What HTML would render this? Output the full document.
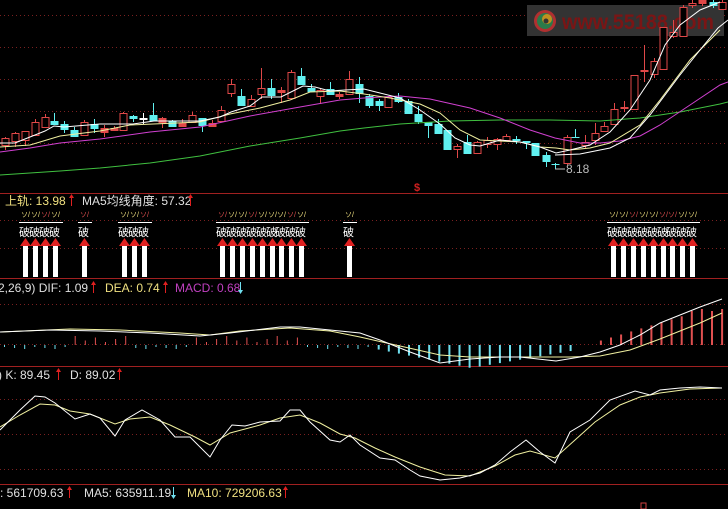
<!DOCTYPE html>
<html><head><meta charset="utf-8"><style>
html,body{margin:0;padding:0;background:#000;width:728px;height:509px;overflow:hidden}
svg{display:block}
text{font-family:"Liberation Sans","Noto Sans CJK SC",sans-serif;font-size:12px}
</style></head><body>
<svg id="s" width="728" height="509" xmlns="http://www.w3.org/2000/svg">
<g stroke="#7a2020" stroke-dasharray="1,3" stroke-width="1">
<line x1="0" y1="15.5" x2="728" y2="15.5"/><line x1="0" y1="47.5" x2="728" y2="47.5"/><line x1="0" y1="79.5" x2="728" y2="79.5"/><line x1="0" y1="111.5" x2="728" y2="111.5"/><line x1="0" y1="143.5" x2="728" y2="143.5"/>
<line x1="0" y1="220.5" x2="728" y2="220.5"/><line x1="0" y1="248.5" x2="728" y2="248.5"/>
<line x1="0" y1="304.5" x2="728" y2="304.5"/><line x1="0" y1="344.5" x2="728" y2="344.5"/>
<line x1="0" y1="399.5" x2="728" y2="399.5"/><line x1="0" y1="434.5" x2="728" y2="434.5"/><line x1="0" y1="469.5" x2="728" y2="469.5"/>
</g>
<g stroke="#a02020" stroke-width="1">
<line x1="0" y1="193.5" x2="728" y2="193.5"/><line x1="0" y1="278.5" x2="728" y2="278.5"/><line x1="0" y1="366.5" x2="728" y2="366.5"/><line x1="0" y1="484.5" x2="728" y2="484.5"/>
</g>
<rect x="527" y="5" width="197" height="31" fill="#333"/>
<circle cx="545" cy="21" r="11" fill="#b03030"/><circle cx="545" cy="21" r="8" fill="#2a7a4a"/><circle cx="547" cy="19" r="5" fill="#c09020"/><circle cx="546" cy="21" r="2.5" fill="#333"/>
<text x="562" y="29" fill="#7a1515" textLength="152" lengthAdjust="spacingAndGlyphs" style="font-size:21px;font-weight:bold">www.55188.com</text>
<g id="c"></g>
<g fill="none" stroke-width="1">
<polyline stroke="#40c040" points="0,175 30,173 60,171 100,168 150,163 200,156 250,146 300,138 340,131 364,128 400,124 450,121 500,120 550,120 600,121 640,118 680,112 720,104 728,102"/>
<polyline stroke="#d040d0" points="0,152 30,148 60,143 100,139 150,132 200,127 250,116 300,107 340,100 364,98 400,96 430,99 470,108 500,118 530,130 555,138 580,143 600,143 620,141 640,136 660,125 690,105 720,85 728,82"/>
<polyline stroke="#f0f0a0" points="0,147 30,145 60,136 100,131 130,125 200,122 230,114 260,108 290,100 310,92 340,91 364,94 390,98 420,104 440,113 460,130 480,140 500,141 520,142 540,147 556,148 570,150 590,148 610,143 640,125 660,100 690,60 720,30"/>
<polyline stroke="#fff" points="555,155 580,154 610,148 630,138 650,115 680,75 700,50 718,28 728,20"/>
<polyline stroke="#fff" points="0,143 15,143 45,131 54,126 64,127 100,124 133,124 154,121 200,121 220,117 231,112 250,106 262,97 281,97 295,90 303,86 315,87 330,91 345,90 364,89 380,93 400,98 420,110 440,124 455,138 470,145 480,146 500,140 520,142 540,147 556,153 570,150 590,145 610,132 630,110 650,80 665,45 680,25 700,10 720,2"/>
</g>
<text x="566" y="173" fill="#bbb">8.18</text>
<line x1="555" y1="169" x2="565" y2="169" stroke="#bbb"/>
<text x="414" y="191" fill="#d02020" style="font-size:11px;font-weight:bold">$</text>
<text x="5" y="205" fill="#f0e080">上轨: 13.98</text>
<text x="82" y="205" fill="#e0e0e0">MA5均线角度: 57.32</text>
<g id="b"></g>
<text x="-2" y="292" fill="#e0e0e0">2,26,9)  DIF: 1.09</text>
<text x="105" y="292" fill="#f0e080">DEA: 0.74</text>
<text x="175" y="292" fill="#c040c0">MACD: 0.68</text>
<g id="h"></g>
<g fill="none">
<polyline stroke="#f0f0a0" points="0,332 70,329 120,330 180,333 210,335 240,331 290,328 330,331 360,337 400,346 440,355 470,357 500,357 540,357 570,357 600,356 630,350 660,339 700,323 722,313"/>
<polyline stroke="#fff" points="0,332 50,330 100,331 150,333 200,336 230,333 280,327 300,327 330,330 360,333 380,340 410,352 440,363 470,359 500,357 520,357 556,361 580,357 600,352 620,345 640,335 660,323 700,307 722,299"/>
</g>
<text x="-2" y="379" fill="#e0e0e0">)  K: 89.45</text>
<text x="70" y="379" fill="#e0e0e0">D: 89.02</text>
<g fill="none">
<polyline stroke="#f0f0a0" points="0,427 20,415 40,404 55,405 70,411 90,414 115,424 130,419 150,417 170,425 195,437 210,445 230,433 260,425 280,418 300,415 320,423 340,434 355,438 375,448 395,457 420,467 445,475 470,476 495,466 515,455 530,451 555,458 575,440 595,422 620,405 640,397 660,393 690,389 722,388"/>
<polyline stroke="#fff" points="0,430 10,420 20,410 35,396 45,397 55,403 75,419 90,414 100,418 115,436 125,420 142,410 160,420 175,437 190,437 210,457 220,440 232,425 245,426 260,422 280,421 290,410 300,410 310,422 330,440 340,442 350,435 360,445 380,458 395,460 410,470 420,476 440,480 460,478 480,473 495,465 510,452 526,440 540,452 555,463 570,432 590,420 610,400 635,391 650,395 660,390 680,388 700,387 722,388"/>
</g>
<text x="0" y="497" fill="#e0e0e0">: 561709.63</text>
<text x="84" y="497" fill="#e0e0e0">MA5: 635911.19</text>
<text x="187" y="497" fill="#f0e080">MA10: 729206.63</text>
<rect x="641" y="503" width="5" height="6" fill="none" stroke="#d04040"/>
<g id="ar"></g>
</svg>
<script>
var NS="http://www.w3.org/2000/svg";
function el(p,t,a){var e=document.createElementNS(NS,t);for(var k in a)e.setAttribute(k,a[k]);document.getElementById(p).appendChild(e);return e;}
var R="#e04848",C="#60f0f0",W="#fff";
var d=[[5,138,146,137,150,R],[15,133,142,132,147,R],[25,131,141,131,146,R],[35,122,136,119,136,R],[45,117,128,114,128,R],[54,121,125,113,125,C,1],[64,124,130,121,133,C,1],[74,130,137,127,137,C,1],[84,122,136,120,136,R],[94,124,129,119,133,C,1],[104,128,133,125,137,R,1],[114,128,131,126,131,R,1],[123,113,131,112,131,R],[133,116,119,115,122,C,1],[143,118,120,113,124,W,1],[153,115,121,103,121,C,1],[162,118,123,117,128,R,1],[172,121,127,120,127,C,1],[182,123,127,119,127,R,1],[192,115,123,112,123,R],[202,118,126,118,132,C,1],[212,123,127,120,127,R,1],[221,110,122,106,122,R],[231,84,94,79,97,R],[241,96,106,89,106,C,1],[251,99,107,95,107,R],[261,88,95,68,99,R],[271,88,96,79,99,C,1],[281,90,93,87,103,R,1],[291,72,99,70,99,R],[301,76,85,68,85,C,1],[311,88,92,84,92,C,1],[320,90,97,88,104,R],[330,89,95,82,95,C,1],[339,94,97,92,99,R,1],[349,79,95,71,95,R],[359,84,94,77,103,C,1],
[369,96,106,94,108,C,1],[379,101,106,99,111,C,1],[388,97,108,96,108,R],[398,97,102,93,103,C,1],[408,101,114,99,114,C,1],[418,114,122,106,124,C,1],[428,122,126,122,138,C,1],[438,124,134,119,134,C,1],[447,130,150,130,150,C,1],[457,146,150,144,158,R],[467,142,154,135,154,C,1],[477,142,154,141,154,R],[487,140,145,137,148,R],[497,139,145,138,150,R],[506,136,141,134,141,R],[516,139,141,136,144,C,1],[526,141,143,141,149,C,1],[535,143,156,143,156,C,1],[546,155,162,152,167,C,1],[555,164,165,163,169,C,1],[567,137,164,135,165,R],[575,137,138,129,138,C,1],[585,142,146,135,148,R],[595,133,141,123,145,R],[604,126,132,122,132,R],[614,109,125,103,125,R],[624,107,109,101,112,R,1],[634,75,110,75,110,R],[644,70,72,45,82,R,1],[654,61,75,58,78,R],[663,27,70,27,70,R],[673,32,37,20,38,R],[683,7,37,5,37,R],[692,3,6,0,8,R],[702,0,4,0,6,R,1],[713,2,6,0,8,C,1],[722,2,10,0,10,R]];
d.forEach(function(c){el("c","line",{x1:c[0]+.5,x2:c[0]+.5,y1:c[3],y2:c[4],stroke:c[5]});var h=Math.max(c[2]-c[1],1);
if(c[6])el("c","rect",{x:c[0]-3.5,y:c[1],width:8,height:h,fill:c[5]});else el("c","rect",{x:c[0]-3,y:c[1]+.5,width:7,height:h-1,fill:"#000",stroke:c[5]});});
var bx=[25,35,45,55,84,124,134,144,222,232,242,252,262,272,281,291,301,349,613,623,633,643,653,663,672,682,692];
bx.forEach(function(x){el("b","rect",{x:x-2,y:246,width:5,height:31,fill:"#fff"});el("b","polygon",{points:(x-5)+",246 "+(x+.5)+",238 "+(x+6)+",246",fill:"#e02020"});
el("b","text",{x:x-6,y:236,fill:"#fff",style:"font-size:11px"}).textContent="破";
el("b","line",{x1:x-6,x2:x+8,y1:222.5,y2:222.5,stroke:"#fff"});
var t=el("b","text",{x:x-4,y:217,fill:(x%3?"#f0e080":"#e05050"),style:"font-size:7px"});t.textContent="ソ/";});
for(var i=0;i<72;i++){var x=4+i*10.1,v,w=1;
if(x<370)v=(x>70&&x<130)||(x>190&&x<300)?-(3+((i*7)%5)*1.5):2+(i%3);
else if(x<575){v=x<470?3+(x-370)*0.2:Math.max(2,23-(x-470)*0.17);w=2;}
else if(x<595)v=0;else{v=-(3+(x-595)*0.3);w=2;}
if(x>690)v=-(34+(i%2)*2);
if(v!=0)el("h","rect",{x:x,y:v<0?345+v:345,width:w,height:Math.abs(v),fill:v<0?"#e05050":"#70e0f0"});}
[[71,205,"#e02020",1],[190,205,"#e02020",1],[93,292,"#e02020",1],[165,292,"#e02020",1],[240,292,"#70e0f0",0],[58,379,"#e02020",1],[119,379,"#e02020",1],[69,497,"#e02020",1],[173,497,"#70e0f0",0],[285,497,"#e02020",1]].forEach(function(a){var x=a[0],y=a[1];
el("ar","line",{x1:x+.5,x2:x+.5,y1:y-10,y2:y+1,stroke:a[2]});
el("ar","polygon",{points:a[3]?(x-2)+","+(y-7)+" "+(x+.5)+","+(y-11)+" "+(x+3)+","+(y-7):(x-2)+","+(y-2)+" "+(x+.5)+","+(y+2)+" "+(x+3)+","+(y-2),fill:a[2]});});
</script>
</body></html>
